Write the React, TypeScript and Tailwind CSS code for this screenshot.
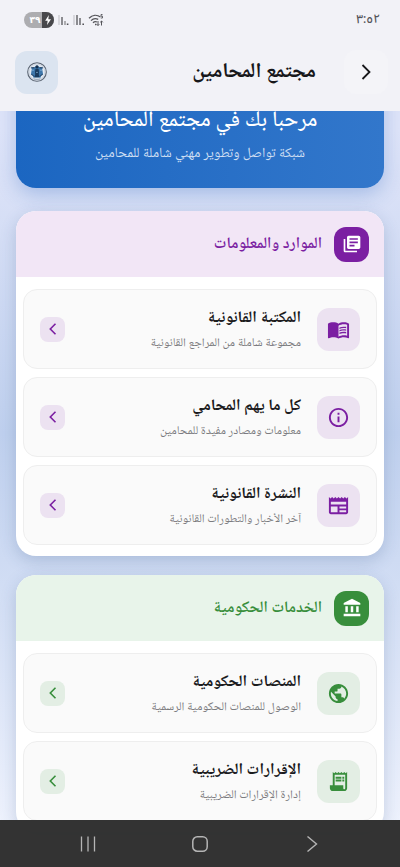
import React from "react";
import {
  MdAccountBalance,
  MdLibraryBooks,
  MdMenuBook,
  MdNewspaper,
  MdOutlineInfo,
  MdPublic,
} from "react-icons/md";

type Icon = React.ComponentType<{ className?: string }>;

type Item = { title: string; text: string; icon: Icon };

type SectionProps = {
  title: string;
  icon: Icon;
  items: Item[];
  tone: "purple" | "green";
};

const tones = {
  purple: {
    head: "bg-[#f2e6f6]",
    solid: "bg-[#7b1fa2]",
    soft: "bg-[#ece2f1]",
    text: "text-[#7b1fa2]",
  },
  green: {
    head: "bg-[#e8f4ea]",
    solid: "bg-[#388e3c]",
    soft: "bg-[#e3eee4]",
    text: "text-[#388e3c]",
  },
};

const ReceiptIcon: Icon = ({ className }) => (
  <svg viewBox="0 0 24 24" className={className} fill="currentColor" fillRule="evenodd">
    <path d="M19.500 3.500 18 2l-1.500 1.500L15 2l-1.500 1.500L12 2l-1.500 1.500L9 2 7.500 3.500 6 2v14H3v3c0 1.660 1.340 3 3 3h12c1.660 0 3-1.340 3-3V2zM19 19c0 .55-.45 1-1 1s-1-.45-1-1v-3H8V5h11z" />
    <path d="M9 7h6v2H9zM16 7h2v2h-2zM9 10h6v2H9zM16 10h2v2h-2z" />
  </svg>
);

const resources: Item[] = [
  { title: "المكتبة القانونية", text: "مجموعة شاملة من المراجع القانونية", icon: MdMenuBook },
  { title: "كل ما يهم المحامي", text: "معلومات ومصادر مفيدة للمحامين", icon: MdOutlineInfo },
  { title: "النشرة القانونية", text: "آخر الأخبار والتطورات القانونية", icon: MdNewspaper },
];

const services: Item[] = [
  { title: "المنصات الحكومية", text: "الوصول للمنصات الحكومية الرسمية", icon: MdPublic },
  { title: "الإقرارات الضريبية", text: "إدارة الإقرارات الضريبية", icon: ReceiptIcon },
];

const StatusBar: React.FC = () => (
  <div className="flex h-10 items-center justify-between pr-5 pl-6 text-[#55555a]">
    <span className="font-['Noto_Sans_Arabic','Noto_Sans',sans-serif] text-xs leading-5 font-medium">٣:٥٢</span>
    <div dir="ltr" className="flex items-center gap-1">
      <div className="flex h-4 w-[30px] items-center rounded-full bg-[#adadb0]">
        <span className="w-[18px] pl-1 text-center font-['DejaVu_Sans',sans-serif] text-[9px] leading-4 font-bold text-white">
          ٣٩
        </span>
        <span className="flex h-4 w-3 items-center justify-center rounded-r-full bg-[#48484b]">
          <svg viewBox="0 0 8 12" className="h-2.5 w-2 fill-white">
            <path d="M5 0 0.6 6.8h3L2.8 12l4.8-7H4.4z" />
          </svg>
        </span>
      </div>
      <svg viewBox="0 0 46 14" className="h-3.5 w-[46px]" fill="none" stroke="currentColor">
        <path d="M1 2v10M16 2v10" stroke="#bdbdc2" strokeWidth="1" />
        <path d="M4 4v8M19 2v10M22 5v7" strokeWidth="1.3" />
        <path d="M7 8v4" stroke="#88888c" strokeWidth="1.3" />
        <path d="M9.6 10.6v1.4M25.2 10.6v1.4" strokeWidth="1.6" />
        <path d="M31 5.2C34.400 1.800 39 1.600 42.500 4M33 7.600c2-2 5-2.400 7.200-1.200M35 9.800c1.200-1.200 2.600-1.400 4-.8" strokeWidth="1.300" />
        <path d="M37 11.500h1.400" strokeWidth="1.600" />
        <path d="M40 8v4.500m-1.300-1.300 1.300 1.300 1.300-1.300M43.500 12.500V8m-1.300 1.300L43.500 8l1.300 1.300" strokeWidth="1" />
        <path d="M44.500 1.500h-1.500v1.700h1.500v1.800h-1.700" strokeWidth="0.900" />
      </svg>
    </div>
  </div>
);

const Emblem: React.FC = () => (
  <svg viewBox="0 0 20 20" className="size-5">
    <circle cx="10" cy="10" r="9.300" fill="#e3eaf3" stroke="#5a6472" strokeWidth="1.100" />
    <circle cx="10" cy="10" r="7.900" fill="none" stroke="#b4bfcc" strokeWidth="0.500" />
    <path d="M4 5.400 7.600 5 10 3.400 12.400 5l3.600.4-.8 1.600.9 5.400-1.900 1-.4 2.200H6.200l-.4-2.200-1.900-1L4.800 7z" fill="#3d76aa" />
    <circle cx="10" cy="4.900" r="1.600" fill="#14304f" />
    <path d="M8.400 7h3.200l.4 3-.2 2.400 1 2.800H7.200l1-2.800L8 10z" fill="#1a3b5e" />
    <path d="M4.200 5.800h3M12.800 5.800h3M4.400 12.600l2.200 1M15.600 12.600l-2.200 1" stroke="#1c3654" strokeWidth="0.900" />
    <path d="M5.400 8.200h1.200M13.400 8.200h1.200M9.400 10.400h1.200" stroke="#a6d0ef" strokeWidth="0.900" />
    <path d="M6.600 16.800c2.200.7 4.600.7 6.800 0" stroke="#74869b" strokeWidth="0.700" fill="none" />
  </svg>
);

const Section: React.FC<SectionProps> = ({ title, icon: Icon, items, tone }) => {
  const c = tones[tone];

  return (
    <section className="overflow-hidden rounded-[20px] bg-white shadow-[0_5px_16px_rgba(50,80,130,0.22)]">
      <div className={`flex h-[66px] items-center gap-3 px-[15px] ${c.head}`}>
        <span className={`flex size-[35px] items-center justify-center rounded-xl text-white ${c.solid}`}>
          <Icon className="size-5" />
        </span>
        <h2 className={`text-base leading-6 font-semibold ${c.text}`}>{title}</h2>
      </div>
      <div className="flex flex-col gap-2 px-[7px] pt-3 pb-[11px]">
        {items.map(({ title, text, icon: ItemIcon }) => (
          <button
            key={title}
            type="button"
            className="flex h-20 items-center gap-4 rounded-[14px] border border-[#eeeeee] bg-[#fafafa] px-4 text-right"
          >
            <span className={`flex size-[43px] shrink-0 items-center justify-center rounded-xl ${c.soft} ${c.text}`}>
              <ItemIcon className="size-[23px]" />
            </span>
            <span className="flex flex-1 flex-col pt-0.5">
              <span className="text-base leading-7 font-bold text-[#1b1b1d]">{title}</span>
              <span className="text-xs leading-6 text-[#7c7c80]">{text}</span>
            </span>
            <span className={`flex size-[25px] shrink-0 items-center justify-center rounded-lg ${c.soft} ${c.text}`}>
              <svg viewBox="0 0 12 12" className="size-3" fill="none" stroke="currentColor" strokeWidth="1.600">
                <path d="M8.500 0.800 3.300 6l5.200 5.200" />
              </svg>
            </span>
          </button>
        ))}
      </div>
    </section>
  );
};

const App: React.FC = () => {
  return (
    <div
      dir="rtl"
      className="relative flex h-screen flex-col overflow-hidden bg-linear-to-b from-[#e0e5f9] from-15% via-[#bfd0ee] via-50% to-[#eef2fd] to-95% font-['Noto_Naskh_Arabic_UI','Noto_Naskh_Arabic','Noto_Sans',sans-serif]"
    >
      <header className="z-10 h-[111px] shrink-0 bg-[#f2f2f7]">
        <StatusBar />
        <div className="flex items-center pt-[10px] pr-3 pl-[15px]">
          <button type="button" aria-label="رجوع" className="flex size-11 items-center justify-center rounded-xl bg-[#f4f4f8]">
            <svg viewBox="0 0 16 16" className="size-4" fill="none" stroke="#17171a" strokeWidth="1.800">
              <path d="M4.500 1 11.500 8l-7 7" />
            </svg>
          </button>
          <h1 className="flex-1 pr-7 text-[21px] leading-7 font-bold text-[#17171a]">مجتمع المحامين</h1>
          <span className="flex size-[43px] items-center justify-center rounded-xl bg-[#dbe4f0]">
            <Emblem />
          </span>
        </div>
      </header>

      <main className="-mt-10 flex flex-col px-4">
        <div className="rounded-[20px] bg-linear-to-r from-[#1b66c1] to-[#3277cb] px-4 pt-[33px] pb-6 text-center text-white shadow-[0_6px_20px_rgba(40,100,190,0.3)]">
          <p className="text-[22px] leading-8 font-medium">مرحباً بك في مجتمع المحامين</p>
          <p className="mt-2 text-sm leading-5 text-[#cfdff3]">شبكة تواصل وتطوير مهني شاملة للمحامين</p>
        </div>
        <div className="mt-[23px] flex flex-col gap-[19px]">
          <Section title="الموارد والمعلومات" icon={MdLibraryBooks} items={resources} tone="purple" />
          <Section title="الخدمات الحكومية" icon={MdAccountBalance} items={services} tone="green" />
        </div>
      </main>

      <nav dir="ltr" className="absolute inset-x-0 bottom-0 flex h-[47px] items-center justify-around bg-[#2f2f2f]/98 px-8 text-[#b5b5b5]">
        <button type="button" aria-label="التطبيقات">
          <svg viewBox="0 0 16 16" className="size-4" fill="none" stroke="currentColor" strokeWidth="1.300">
            <path d="M1.500 0.500v15M8 0.500v15M14.500 0.500v15" />
          </svg>
        </button>
        <button type="button" aria-label="الرئيسية">
          <svg viewBox="0 0 16 16" className="size-4" fill="none" stroke="currentColor" strokeWidth="1.500">
            <rect x="0.800" y="0.800" width="14.400" height="14.400" rx="4.500" />
          </svg>
        </button>
        <button type="button" aria-label="السابق">
          <svg viewBox="0 0 16 16" className="size-4" fill="none" stroke="currentColor" strokeWidth="1.400">
            <path d="M3.500 0.500 12.500 8l-9 7.500" />
          </svg>
        </button>
      </nav>
    </div>
  );
};

export default App;
